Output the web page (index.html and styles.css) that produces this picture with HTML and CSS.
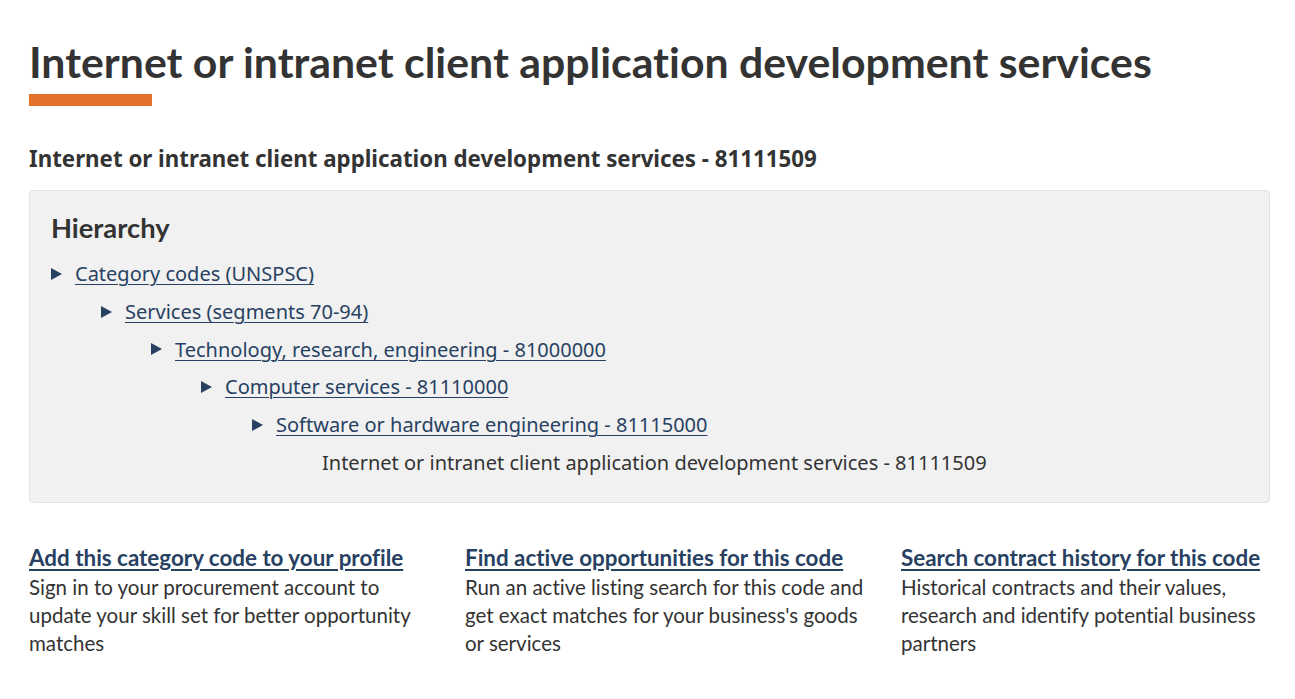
FILE: index.html
```html
<!DOCTYPE html>
<html lang="en">
<head>
<meta charset="utf-8">
<title>Internet or intranet client application development services</title>
<link rel="stylesheet" href="styles.css">
</head>
<body>
<main class="page">
  <h1 class="title">Internet or intranet client application development services</h1>
  <h2 class="subtitle">Internet or intranet client application development services - 81111509</h2>
  <section class="hierarchy">
    <h3 class="hierarchy-title">Hierarchy</h3>
    <ul class="tree">
      <li class="node lvl0"><span class="tri"></span><a href="#">Category codes (UNSPSC)</a></li>
      <li class="node lvl1"><span class="tri"></span><a href="#">Services (segments 70-94)</a></li>
      <li class="node lvl2"><span class="tri"></span><a href="#">Technology, research, engineering - 81000000</a></li>
      <li class="node lvl3"><span class="tri"></span><a href="#">Computer services - 81110000</a></li>
      <li class="node lvl4"><span class="tri"></span><a href="#">Software or hardware engineering - 81115000</a></li>
      <li class="node leaf">Internet or intranet client application development services - 81111509</li>
    </ul>
  </section>
  <section class="actions">
    <div class="action">
      <a class="action-link" href="#">Add this category code to your profile</a>
      <p class="action-text">Sign in to your procurement account to update your skill set for better opportunity matches</p>
    </div>
    <div class="action">
      <a class="action-link" href="#">Find active opportunities for this code</a>
      <p class="action-text">Run an active listing search for this code and get exact matches for your business's goods or services</p>
    </div>
    <div class="action">
      <a class="action-link" href="#">Search contract history for this code</a>
      <p class="action-text">Historical contracts and their values, research and identify potential business partners</p>
    </div>
  </section>
</main>
</body>
</html>
```
FILE: styles.css
```css
html, body {
  margin: 0;
  padding: 0;
  background: #fff;
}
body {
  font-family: "Noto Sans", sans-serif;
  color: #333;
  overflow: hidden;
  font-variant-ligatures: none;
}
.page {
  padding: 35px 25px 0 29px;
}
.title {
  font-family: Lato, sans-serif;
  font-weight: 700;
  font-size: 42.8px;
  line-height: 54px;
  margin: 0;
  color: #333;
}
.title::after {
  content: "";
  display: block;
  width: 123px;
  height: 12px;
  margin-top: 5px;
  background: #e1712b;
}
.subtitle {
  font-family: "Noto Sans", sans-serif;
  font-weight: 700;
  font-size: 22.3px;
  line-height: 30px;
  margin: 38px 0 16px;
  color: #333;
}
.hierarchy {
  background: #f1f1f1;
  border: 1px solid #e3e3e3;
  border-radius: 4px;
  padding: 20px 21px 20px;
}
.hierarchy-title {
  font-family: Lato, sans-serif;
  font-weight: 700;
  font-size: 27.3px;
  line-height: 34px;
  margin: 0 0 10px;
  color: #333;
}
.tree {
  list-style: none;
  margin: 0;
  padding: 0;
}
.node {
  display: flex;
  align-items: center;
  font-size: 20px;
  line-height: 38px;
  height: 37.8px;
}
.node a {
  color: #284162;
  text-decoration: underline;
  text-underline-offset: 3px;
  text-decoration-thickness: 1px;
}
.tri {
  width: 0;
  height: 0;
  border-top: 6px solid transparent;
  border-bottom: 6px solid transparent;
  border-left: 11px solid #284162;
  margin-right: 13px;
}
.lvl1 { padding-left: 50px; }
.lvl2 { padding-left: 100px; }
.lvl3 { padding-left: 150px; }
.lvl4 { padding-left: 201px; }
.leaf { padding-left: 271px; }
.actions {
  display: grid;
  grid-template-columns: 410px 410px 1fr;
  column-gap: 26px;
  margin-top: 41px;
}
.action-link {
  display: inline-block;
  margin-bottom: 1px;
  font-family: Lato, sans-serif;
  font-weight: 700;
  font-size: 22.4px;
  line-height: 28px;
  color: #284162;
  text-decoration: underline;
  text-underline-offset: 3px;
}
.action-text {
  font-family: Lato, sans-serif;
  font-size: 20.5px;
  line-height: 28px;
  margin: 0;
  color: #333;
}
```
